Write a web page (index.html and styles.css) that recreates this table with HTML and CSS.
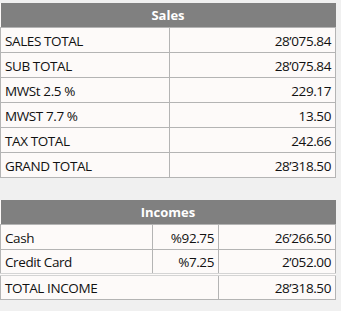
FILE: index.html
```html
<!DOCTYPE html>
<html>
<head>
<meta charset="utf-8">
<link rel="stylesheet" href="styles.css">
</head>
<body>
<div class="page">
  <table class="report sales">
    <colgroup><col class="c-half"><col></colgroup>
    <thead><tr><th colspan="2">Sales</th></tr></thead>
    <tbody>
      <tr><td>SALES TOTAL</td><td class="num">28’075.84</td></tr>
      <tr><td>SUB TOTAL</td><td class="num">28’075.84</td></tr>
      <tr><td>MWSt 2.5 %</td><td class="num">229.17</td></tr>
      <tr><td>MWST 7.7 %</td><td class="num">13.50</td></tr>
      <tr><td>TAX TOTAL</td><td class="num">242.66</td></tr>
      <tr><td>GRAND TOTAL</td><td class="num">28’318.50</td></tr>
    </tbody>
  </table>

  <table class="report incomes">
    <colgroup><col class="c-name"><col class="c-pct"><col></colgroup>
    <thead><tr><th colspan="3">Incomes</th></tr></thead>
    <tbody>
      <tr><td>Cash</td><td class="num">%92.75</td><td class="num">26’266.50</td></tr>
      <tr class="last-item"><td>Credit Card</td><td class="num">%7.25</td><td class="num">2’052.00</td></tr>
      <tr class="total"><td colspan="2">TOTAL INCOME</td><td class="num">28’318.50</td></tr>
    </tbody>
  </table>
</div>
</body>
</html>
```

FILE: styles.css
```css
html, body {
  margin: 0;
  padding: 0;
  background: #f0f0f0;
}
.page {
  padding-top: 3px;
  display: flex;
  flex-direction: column;
  gap: 22px;
  font-family: "Open Sans", "Noto Sans", sans-serif;
  font-size: 13.5px;
  color: #111;
}
.report {
  width: 336px;
  border-collapse: collapse;
  table-layout: fixed;
  background: #fdfaf9;
}
.report th {
  background: #808080;
  color: #fff;
  font-weight: 700;
  height: 24px;
  padding: 0;
  text-align: center;
  font-size: 13px;
}
.report tbody tr {
  height: 25px;
}
.report td {
  padding: 1px 4px 0;
  border: 1px solid #b4b4b4;
  white-space: nowrap;
  letter-spacing: -0.4px;
}
.report td.num {
  text-align: right;
}
.c-half { width: 169px; }
.c-name { width: 152px; }
.c-pct { width: 66px; }
.incomes tr.last-item td {
  border-bottom: 3px double #d4d4d4;
}
```
